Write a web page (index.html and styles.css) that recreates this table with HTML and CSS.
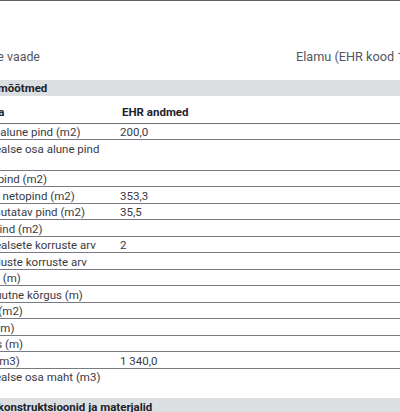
FILE: index.html
```html
<!DOCTYPE html>
<html lang="et">
<head>
<meta charset="utf-8">
<title>Ehitise vaade</title>
<link rel="stylesheet" href="styles.css">
</head>
<body>
<div class="page">
  <div class="title-row">
    <span class="title">Ehitise vaade</span>
    <span class="subtitle">Elamu (EHR kood 101290474)</span>
  </div>
  <section class="section">
    <h2 class="section-bar">Ehitise mõõtmed</h2>
    <table class="data">
      <colgroup><col class="col-name"><col class="col-value"></colgroup>
      <thead>
        <tr><th>Näitaja</th><th class="th-value">EHR andmed</th></tr>
      </thead>
      <tbody>
        <tr><td>Ehitisealune pind (m2)</td><td>200,0</td></tr>
        <tr><td>Maapealse osa alune pind (m2)</td><td></td></tr>
        <tr><td>Tehnopind (m2)</td><td></td></tr>
        <tr><td>Hoone netopind (m2)</td><td>353,3</td></tr>
        <tr><td>Üldkasutatav pind (m2)</td><td>35,5</td></tr>
        <tr><td>Küttepind (m2)</td><td></td></tr>
        <tr><td>Maapealsete korruste arv</td><td>2</td></tr>
        <tr><td>Maa-aluste korruste arv</td><td></td></tr>
        <tr><td>Pikkus (m)</td><td></td></tr>
        <tr><td>Absoluutne kõrgus (m)</td><td></td></tr>
        <tr><td>Katus (m2)</td><td></td></tr>
        <tr><td>Laius (m)</td><td></td></tr>
        <tr><td>Kõrgus (m)</td><td></td></tr>
        <tr><td>Maht (m3)</td><td>1 340,0</td></tr>
        <tr><td>Maapealse osa maht (m3)</td><td></td></tr>
      </tbody>
    </table>
  </section>
  <section class="section">
    <h2 class="section-bar">Ehitise konstruktsioonid ja materjalid</h2>
  </section>
</div>
</body>
</html>
```

FILE: styles.css
```css
html, body {
  margin: 0;
  padding: 0;
  background: #ffffff;
  overflow: hidden;
}

body {
  font-family: Roboto, "Liberation Sans", sans-serif;
  color: #3a3a44;
  border-top: 1px solid #5c5c64;
}

.page {
  margin-left: -38px;
  width: 600px;
}

.title-row {
  display: flex;
  padding: 48px 0 0 5px;
  font-size: 12.4px;
  line-height: 16px;
  color: #55555f;
}

.title {
  width: 329px;
  flex: none;
  white-space: nowrap;
}

.subtitle {
  white-space: nowrap;
  font-size: 12.7px;
}

.section {
  margin-top: 14.6px;
}

.section + .section {
  margin-top: 14px;
}

.section-bar {
  margin: 0;
  background: #dcdfe1;
  font-size: 11.5px;
  font-weight: 700;
  line-height: 15px;
  padding: 1.5px 4px 0;
  height: 16px;
  box-sizing: border-box;
  text-indent: -6px;
  color: #22222a;
}

.data {
  border-collapse: collapse;
  table-layout: fixed;
  width: 600px;
  font-size: 11.5px;
}

.col-name {
  width: 154px;
}

.data th {
  text-align: left;
  font-weight: 700;
  color: #22222a;
  line-height: 15.5px;
  padding: 9px 4px 2.5px 6px;
  border-bottom: 1px solid #6e6e78;
}

.data td {
  line-height: 14px;
  padding: 1.5px 4px 0;
  border-bottom: 1px solid #7a7a84;
  vertical-align: top;
  color: #3a3a44;
}

.data tbody tr:last-child td {
  border-bottom: none;
}
```
